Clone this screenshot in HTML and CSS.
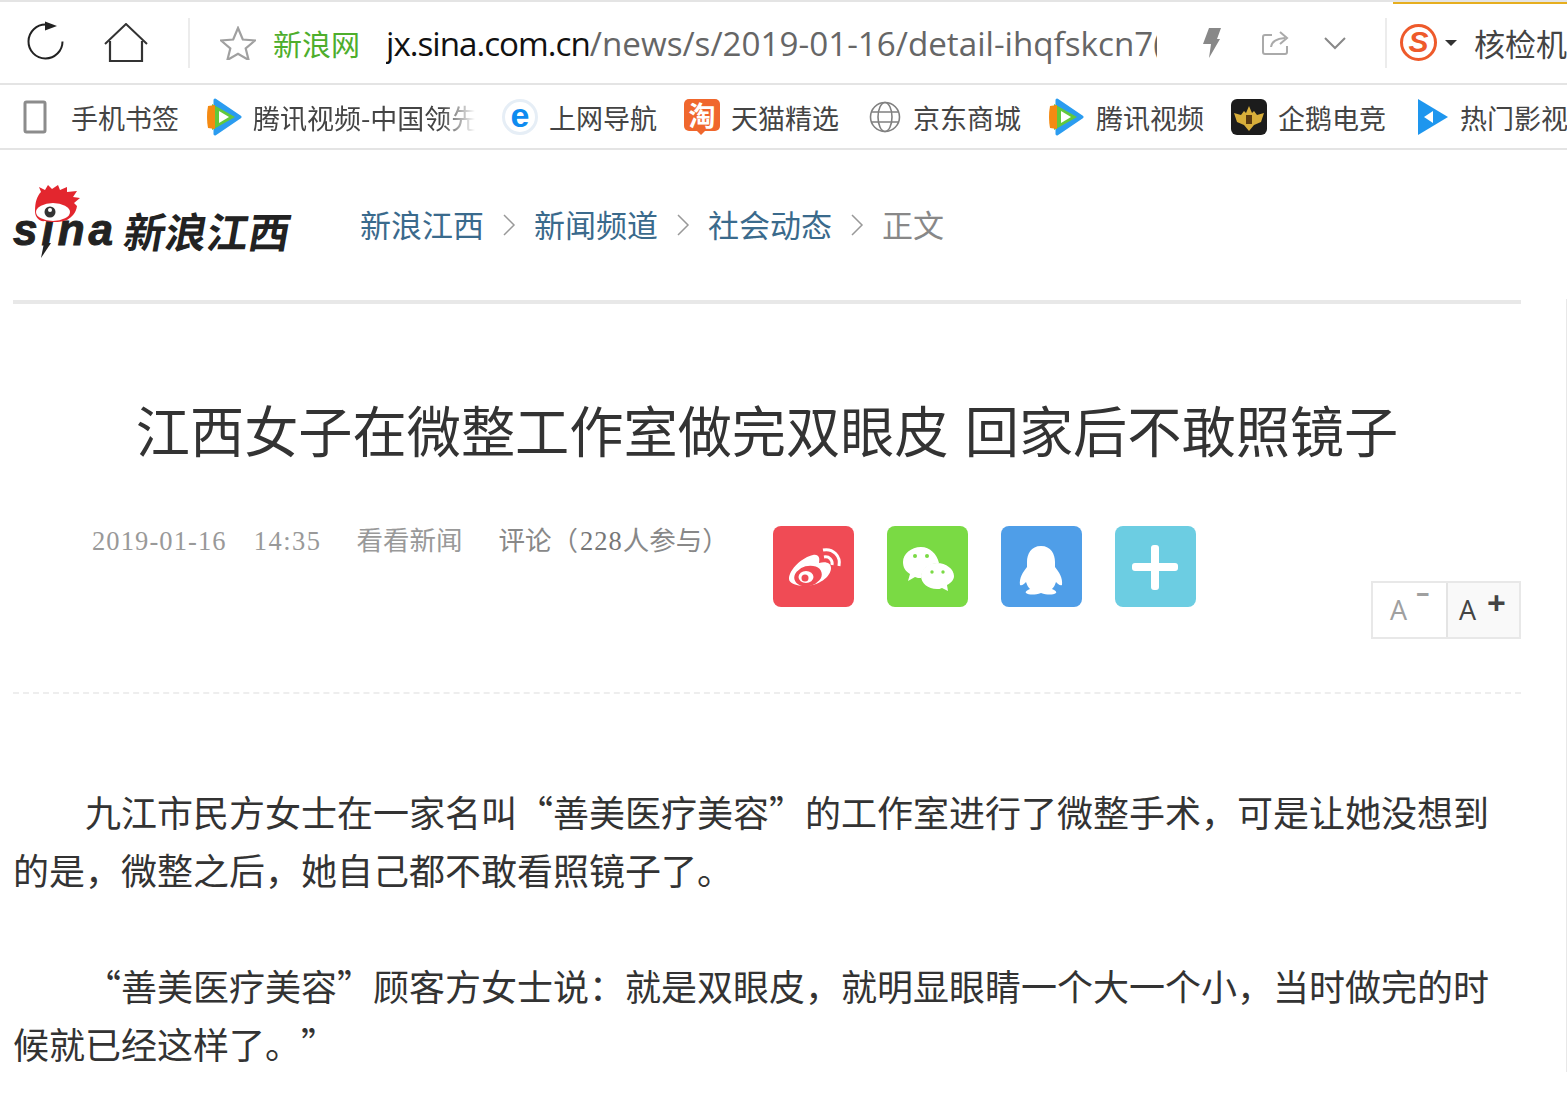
FILE: index.html
```html
<!DOCTYPE html>
<html lang="zh-CN">

<head>
    <meta charset="utf-8">
    <title>江西女子在微整工作室做完双眼皮 回家后不敢照镜子</title>
    <link rel="stylesheet" href="styles.css">
</head>

<body>
    <!-- browser toolbar -->
    <div class="toolbar">
        <svg class="ic-reload" width="40" height="44" viewBox="0 0 40 44"><path d="M35.500 20.500A17 17 0 1 1 19 3.500" fill="none" stroke="#222" stroke-width="2"/><path d="M18 0.500L30 5 18 9.500z" fill="#222"/></svg>
        <svg class="ic-home" width="44" height="40" viewBox="0 0 44 40"><path d="M1 21L22 1l21 20" fill="none" stroke="#333" stroke-width="2"/><path d="M6 18v20h32V18" fill="none" stroke="#333" stroke-width="2.200"/></svg>
        <span class="divider div-a"></span>
        <svg class="ic-star" width="36" height="34" viewBox="0 0 36 34"><path d="M18 2l4.800 11.500 12.200 1-9.300 8 2.900 11.500-10.600-6.300-10.600 6.300 2.900-11.500-9.300-8 12.200-1z" fill="none" stroke="#a0a0a0" stroke-width="2.200"/></svg>
        <span class="site-name">新浪网</span>
        <div class="url"><b>jx.sina.com.cn</b>/news/s/2019-01-16/detail-ihqfskcn7(</div>
        <svg class="ic-bolt" width="18" height="30" viewBox="0 0 18 30"><path d="M6 0h12l-4 11h3L6 30l2-14H0z" fill="#888"/></svg>
        <svg class="ic-share" width="28" height="26" viewBox="0 0 28 26"><path d="M10 5H3Q1 5 1 7v15q0 2 2 2h20q2 0 2-2v-6" fill="none" stroke="#aaa" stroke-width="2"/><path d="M9 17q1-8 14-9" fill="none" stroke="#aaa" stroke-width="2"/><path d="M18 2l7 6-7 6" fill="none" stroke="#aaa" stroke-width="2"/></svg>
        <svg class="ic-chev" width="22" height="14" viewBox="0 0 22 14"><path d="M1 2l10 10L21 2" fill="none" stroke="#888" stroke-width="2"/></svg>
        <span class="divider div-b"></span>
        <span class="sogou">S</span>
        <span class="caret"></span>
        <span class="search-word">核检机构</span>
    </div>

    <!-- bookmarks -->
    <div class="bookmarks">
        <a class="mark mark-phone">
            <svg width="24" height="34" viewBox="0 0 24 34"><rect x="2" y="2" width="20" height="30" rx="1.500" fill="none" stroke="#8c8c8c" stroke-width="3"/></svg>
            <span class="mark-text">手机书签</span>
        </a>
        <a class="mark">
            <svg class="tv" width="36" height="38" viewBox="0 0 36 38"><path d="M9 2l25 17L9 36z" fill="#2b9cf0" stroke="#2b9cf0" stroke-width="3" stroke-linejoin="round"/><path d="M6 6l23 13L6 32z" fill="#62c83c"/><path d="M2 8l7-1v24l-7-1q-2-11 0-22z" fill="#f58a12"/><path d="M13 13l10 6-10 6z" fill="#fff"/></svg>
            <span class="mark-text fade">腾讯视频-中国领先</span>
        </a>
        <a class="mark">
            <span class="ie">e</span>
            <span class="mark-text">上网导航</span>
        </a>
        <a class="mark mark-tao">
            <span class="tao">淘</span>
            <span class="mark-text">天猫精选</span>
        </a>
        <a class="mark mark-globe">
            <svg width="32" height="32" viewBox="0 0 32 32"><g fill="none" stroke="#808080" stroke-width="1.600"><circle cx="16" cy="16" r="14.500"/><ellipse cx="16" cy="16" rx="7" ry="14.500"/><path d="M2 11h28M2 21h28"/></g></svg>
            <span class="mark-text">京东商城</span>
        </a>
        <a class="mark mark-tv2">
            <svg class="tv" width="36" height="38" viewBox="0 0 36 38"><path d="M9 2l25 17L9 36z" fill="#2b9cf0" stroke="#2b9cf0" stroke-width="3" stroke-linejoin="round"/><path d="M6 6l23 13L6 32z" fill="#62c83c"/><path d="M2 8l7-1v24l-7-1q-2-11 0-22z" fill="#f58a12"/><path d="M13 13l10 6-10 6z" fill="#fff"/></svg>
            <span class="mark-text">腾讯视频</span>
        </a>
        <a class="mark mark-egame">
            <svg width="36" height="36" viewBox="0 0 36 36"><rect width="36" height="36" rx="6" fill="#1c1c1c"/><path d="M3 14l7 2 3-4 2 2 3-7 3 7 2-2 3 4 7-2-3 9-7 3-5 6-5-6-7-3z" fill="#d8ae3a"/><rect x="15" y="16" width="6" height="9" fill="#5a3a10"/></svg>
            <span class="mark-text">企鹅电竞</span>
        </a>
        <a class="mark">
            <svg width="32" height="36" viewBox="0 0 32 36"><path d="M1 0l30 18L1 36z" fill="#1e96ee"/><path d="M16 12v12l-9-6z" fill="#fff"/></svg>
            <span class="mark-text">热门影视</span>
        </a>
    </div>

    <!-- page -->
    <div class="page">
        <header class="site-head">
            <div class="logo">
                <span class="logo-sina">sina</span>
                <svg class="logo-eye" width="54" height="76" viewBox="0 0 54 76">
                    <path d="M5 27C5 18 7 12 11 8L9 3l6 3 3-5 4 4 6-4 2 5 7-3v5l10-1-4 6 7 1-6 5 3 3c-1 7-5 11-10 14-5 2-15 3-22 1C9 38 5 33 5 27z" fill="#e3262e"/>
                    <ellipse cx="23" cy="28" rx="17" ry="9" fill="#fff"/>
                    <circle cx="20" cy="28" r="5.500" fill="#333"/>
                    <circle cx="20" cy="26" r="2" fill="#fff"/>
                    <path d="M14 59h7L11 74z" fill="#222"/>
                </svg>
                <span class="logo-name">新浪江西</span>
            </div>
            <nav class="crumbs">
                <a>新浪江西</a>
                <svg width="14" height="24" viewBox="0 0 14 24"><path d="M2 2l10 10L2 22" fill="none" stroke="#999" stroke-width="1.500"/></svg>
                <a>新闻频道</a>
                <svg width="14" height="24" viewBox="0 0 14 24"><path d="M2 2l10 10L2 22" fill="none" stroke="#999" stroke-width="1.500"/></svg>
                <a>社会动态</a>
                <svg width="14" height="24" viewBox="0 0 14 24"><path d="M2 2l10 10L2 22" fill="none" stroke="#999" stroke-width="1.500"/></svg>
                <span class="crumb-now">正文</span>
            </nav>
        </header>

        <h1 class="title">江西女子在微整工作室做完双眼皮 回家后不敢照镜子</h1>

        <div class="meta-row">
            <div class="meta">
                <span class="num m-date">2019-01-16</span>
                <span class="num m-time">14:35</span>
                <span class="m-src">看看新闻</span>
                <span class="m-cmt">评论（<i>228</i>人参与）</span>
            </div>
            <div class="share">
                <a class="sh sh-weibo">
                    <svg width="81" height="81" viewBox="0 0 81 81"><path d="M16 53c0-10 14-22 24-24 6-1 7 3 6 8 7-2 12 0 12 5 0 9-13 18-26 18-9 0-16-3-16-7z" fill="#fff"/><ellipse cx="35" cy="50" rx="14" ry="10" transform="rotate(-15 35 50)" fill="#f04b55"/><ellipse cx="33" cy="51" rx="7.500" ry="6" fill="#fff"/><circle cx="32" cy="52" r="3.500" fill="#f04b55"/><path d="M50 24c10-2 18 6 16 16M51 31c5-1 9 3 8 8" fill="none" stroke="#fff" stroke-width="3"/></svg>
                </a>
                <a class="sh sh-wx">
                    <svg width="81" height="81" viewBox="0 0 81 81"><path d="M34 21c-10 0-18 7-18 15 0 5 2 9 7 12l-2 7 7-4c2 1 4 1 6 1 0-8 7-15 18-15-2-9-9-16-18-16z" fill="#fff"/><path d="M50 37c-9 0-16 6-16 13s7 13 16 13c2 0 3 0 5-1l6 3-1-6c4-2 7-5 7-9 0-7-8-13-17-13z" fill="#fff"/><g fill="#7ada44"><circle cx="28" cy="30" r="2"/><circle cx="40" cy="30" r="2"/><circle cx="45" cy="46" r="1.700"/><circle cx="56" cy="46" r="1.700"/></g></svg>
                </a>
                <a class="sh sh-qq">
                    <svg width="81" height="81" viewBox="0 0 81 81"><path d="M40 20c-10 0-14 8-14 16v5c-4 5-8 11-7 18 2 1 4-1 6-3 1 3 2 5 4 7-3 1-5 3-4 4 3 2 9 2 15 0 6 2 12 2 15 0 1-1-1-3-4-4 2-2 3-4 4-7 2 2 4 4 6 3 1-7-3-13-7-18v-5c0-8-4-16-14-16z" fill="#fff"/></svg>
                </a>
                <a class="sh sh-more">
                    <svg width="81" height="81" viewBox="0 0 81 81"><rect x="17" y="37" width="46" height="8" rx="3" fill="#fff"/><rect x="36" y="19" width="8" height="45" rx="3" fill="#fff"/></svg>
                </a>
            </div>
            <div class="font-size">
                <span class="fs fs-down">A<sup>–</sup></span>
                <span class="fs fs-up">A<sup>+</sup></span>
            </div>
        </div>

        <article class="content">
            <p>九江市民方女士在一家名叫“善美医疗美容”的工作室进行了微整手术，可是让她没想到的是，微整之后，她自己都不敢看照镜子了。</p>
            <p>“善美医疗美容”顾客方女士说：就是双眼皮，就明显眼睛一个大一个小，当时做完的时候就已经这样了。”</p>
        </article>
    </div>
</body>

</html>
```

FILE: styles.css
```css
* {
    margin: 0;
    padding: 0;
    box-sizing: border-box;
}

html,
body {
    height: 100%;
    overflow: hidden;
}

body {
    background: #fff;
    color: #333;
    font-family: "Noto Sans CJK SC", sans-serif;
    text-spacing-trim: space-all;
}

/* toolbar */
.toolbar {
    display: flex;
    align-items: center;
    height: 85px;
    padding-left: 27px;
    border-top: 2px solid #e4e4e4;
    border-bottom: 2px solid #e4e4e4;
    position: relative;
    white-space: nowrap;
    overflow: hidden;
}

.toolbar > * {
    flex: none;
}

.toolbar::after {
    content: "";
    position: absolute;
    left: 1393px;
    right: 0;
    top: 0;
    height: 2px;
    background: #e6ae1f;
}

.ic-home {
    margin-left: 37px;
}

.divider {
    width: 2px;
    height: 50px;
    background: #ececec;
}

.div-a {
    margin-left: 40px;
}

.ic-star {
    margin-left: 30px;
}

.site-name {
    margin-left: 17px;
    font-size: 29px;
    color: #4eae2c;
}

.url {
    width: 771px;
    margin-left: 26px;
    padding-top: 2px;
    overflow: hidden;
    font-family: "Open Sans", sans-serif;
    font-size: 33.200px;
    color: #666;
}

.url b {
    font-weight: 400;
    letter-spacing: -1px;
    color: #111;
}

.ic-bolt {
    margin-left: 46px;
}

.ic-share {
    margin-left: 41px;
}

.ic-chev {
    margin-left: 34px;
}

.div-b {
    margin-left: 39px;
}

.sogou {
    width: 37px;
    height: 37px;
    margin-left: 13px;
    border: 3px solid #ee5a2b;
    border-radius: 50%;
    color: #ee5a2b;
    font: italic 700 30px/30px "Liberation Sans", sans-serif;
    text-align: center;
}

.caret {
    margin-left: 8px;
    border: 6px solid transparent;
    border-top: 6px solid #333;
    border-bottom: 0;
}

.search-word {
    margin-left: 17px;
    font-size: 31px;
    color: #444;
}

/* bookmarks */
.bookmarks {
    display: flex;
    align-items: center;
    height: 65px;
    padding-left: 23px;
    border-bottom: 2px solid #e4e4e4;
    white-space: nowrap;
    overflow: hidden;
}

.mark {
    display: flex;
    align-items: center;
    flex: none;
    margin-right: 27px;
}

.mark svg,
.ie,
.tao {
    flex: none;
}

.mark-text {
    margin-top: 2px;
    margin-left: 11px;
    font-size: 27px;
    line-height: 40px;
    color: #444;
}

.mark-phone .mark-text {
    margin-left: 24px;
}

.fade {
    width: 222px;
    overflow: hidden;
    -webkit-mask-image: linear-gradient(to right, #000 85%, transparent);
    mask-image: linear-gradient(to right, #000 85%, transparent);
}

.ie {
    width: 36px;
    height: 36px;
    border: 3px solid #e6eef6;
    border-radius: 50%;
    color: #0e8bf0;
    font: 700 34px/26px "Liberation Sans", sans-serif;
    text-align: center;
}

.mark-tao {
    margin-right: 30px;
}

.tao {
    position: relative;
    display: block;
    width: 36px;
    height: 32px;
    margin-bottom: 4px;
    border-radius: 5px;
    background: #f0672d;
    color: #fff;
    font-size: 27px;
    font-weight: 700;
    line-height: 32px;
    text-align: center;
}

.tao::after {
    content: "";
    position: absolute;
    left: 13px;
    top: 32px;
    border: 4px solid transparent;
    border-top: 4px solid #f0672d;
    border-bottom: 0;
}

.mark-globe .mark-text {
    margin-left: 12px;
}

.mark-tv2 .mark-text {
    margin-left: 12px;
}

.mark-egame {
    margin-right: 31px;
}

/* page */
.page {
    position: relative;
    width: 1567px;
    padding: 0 46px 0 13px;
}

.page::after {
    content: "";
    position: absolute;
    right: 0;
    top: 149px;
    bottom: 0;
    width: 1px;
    background: #e8e8e8;
}

.site-head {
    display: flex;
    align-items: center;
    height: 154px;
    border-bottom: 4px solid #e8e8e8;
}

.logo {
    position: relative;
    display: flex;
    align-items: flex-start;
    width: 347px;
    height: 90px;
}

.logo-sina {
    width: 112px;
    margin-top: 25px;
    color: #222;
    font: italic 700 44px/50px "Liberation Sans", sans-serif;
    letter-spacing: 4px;
    -webkit-text-stroke: 1px #222;
}

.logo-eye {
    position: absolute;
    left: 17px;
    top: 4px;
}

.logo-name {
    margin-top: 25px;
    color: #222;
    font-size: 41.500px;
    font-weight: 700;
    line-height: 50px;
    transform: skewX(-10deg);
}

.crumbs {
    display: flex;
    align-items: center;
    gap: 18px;
    margin-bottom: 4px;
    font-family: "Liberation Serif", "Noto Sans CJK SC", sans-serif;
    font-size: 31px;
    color: #3a6a8c;
}

.crumbs svg {
    margin-top: 4px;
}

.crumb-now {
    color: #888;
}

.title {
    padding-top: 85px;
    font-size: 54.200px;
    font-weight: 400;
    line-height: 80px;
    text-align: center;
    word-spacing: 4px;
    color: #333;
}

.meta-row {
    display: flex;
    align-items: flex-start;
    margin-top: 57px;
    padding: 0 0 53px 79px;
    border-bottom: 2px dashed #eeeeee;
}

.meta {
    display: flex;
    flex: none;
    width: 681px;
    margin-top: -2px;
    font-family: "Liberation Serif", "Noto Sans CJK SC", sans-serif;
    font-size: 26.500px;
    line-height: 34px;
    color: #999;
}

.meta i {
    margin-left: 2px;
    font-style: normal;
    letter-spacing: 1px;
    color: #777;
}

.num {
    letter-spacing: 1.100px;
}

.m-time {
    margin-left: 27px;
    letter-spacing: 1.500px;
}

.m-src {
    margin-left: 35px;
}

.m-cmt {
    margin-left: 36px;
    color: #888;
}

.share {
    display: flex;
    flex: none;
    gap: 33px;
}

.sh {
    display: block;
    width: 81px;
    height: 81px;
    border-radius: 8px;
}

.sh svg {
    display: block;
}

.sh-weibo {
    background: #f04b55;
}

.sh-wx {
    background: #7ada44;
}

.sh-qq {
    background: #4f9ee8;
}

.sh-more {
    background: #6ccde2;
}

.font-size {
    display: flex;
    flex: none;
    width: 150px;
    height: 58px;
    margin: 55px 0 0 auto;
    border: 2px solid #e8e8e8;
    font-family: "Open Sans", sans-serif;
    font-size: 27px;
}

.fs {
    display: flex;
    width: 50%;
    padding: 8px 0 0 17px;
    line-height: 38px;
}

.fs sup {
    font-weight: 700;
}

.fs-down {
    color: #a0a0a0;
}

.fs-down sup {
    margin: -9px 0 0 9px;
    font-size: 27px;
    line-height: 20px;
}

.fs-up {
    border-left: 2px solid #e4e4e4;
    background: #f9f9f9;
    color: #444;
    padding-left: 11px;
}

.fs-up sup {
    margin: 2px 0 0 11px;
    font-size: 33px;
    line-height: 20px;
}

.content {
    margin-top: 88px;
    font-size: 36px;
    line-height: 58px;
    color: #333;
}

.content p {
    margin-bottom: 58px;
    text-indent: 72px;
}
```
